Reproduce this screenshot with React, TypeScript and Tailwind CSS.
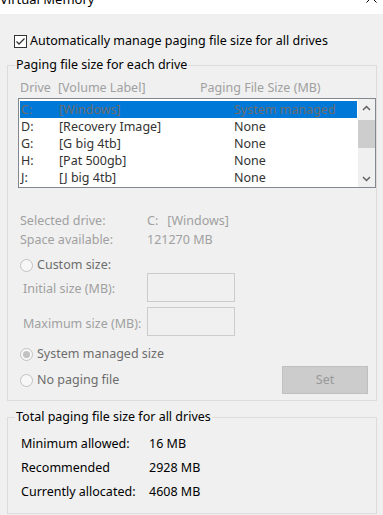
import type { ReactNode } from "react";

const drives = [
  { letter: "C:", label: "[Windows]", size: "System managed" },
  { letter: "D:", label: "[Recovery Image]", size: "None" },
  { letter: "G:", label: "[G big 4tb]", size: "None" },
  { letter: "H:", label: "[Pat 500gb]", size: "None" },
  { letter: "J:", label: "[J big 4tb]", size: "None" },
];

function Chevron({ up }: { up?: boolean }) {
  return (
    <svg width="9" height="6" viewBox="0 0 9 6" fill="none">
      <path
        d={up ? "M1 5 L4.5 1.5 L8 5" : "M1 1 L4.5 4.5 L8 1"}
        stroke="#606060"
        strokeWidth="1.5"
      />
    </svg>
  );
}

function Radio({ checked, children }: { checked?: boolean; children: ReactNode }) {
  return (
    <div className="flex items-center gap-[4px] h-[16px] pl-[12px] text-[#6d6d6d]">
      <span className="w-[13px] h-[13px] rounded-full border border-[#c2c2c2] bg-[#f7f7f7] flex items-center justify-center">
        {checked && <span className="w-[7px] h-[7px] rounded-full bg-[#c2c2c2]" />}
      </span>
      <span>{children}</span>
    </div>
  );
}

export default function App() {
  return (
    <div className="w-[383px] h-[515px] bg-[#f0f0f0] overflow-hidden text-[12.5px] leading-[16px] text-black font-['Noto_Sans',sans-serif]">
      {/* Title bar (cut off at top) */}
      <div className="h-[14px] bg-white flex justify-between overflow-hidden">
        <span className="-mt-[9px] text-[13px] leading-[16px]">Virtual Memory</span>
        <svg width="11" height="11" viewBox="0 0 11 11" className="-mt-[8px] mr-[6px]">
          <path d="M0.5 0.5 L10.5 10.5 M10.5 0.5 L0.5 10.5" stroke="#000" strokeWidth="1" />
        </svg>
      </div>

      {/* Auto manage checkbox */}
      <div className="flex items-center gap-[3px] mt-[19px] ml-[14px] h-[16px]">
        <span className="w-[13px] h-[13px] border border-[#333333] bg-white flex items-center justify-center">
          <svg width="11" height="11" viewBox="0 0 11 11" fill="none">
            <path d="M1.5 5.5 L4 8 L9.5 2.5" stroke="#333333" strokeWidth="1.3" />
          </svg>
        </span>
        <span>Automatically manage paging file size for all drives</span>
      </div>

      {/* Paging file size for each drive */}
      <fieldset className="mt-[8px] ml-[7px] w-[370px] border border-[#dcdcdc] pb-[6px]">
        <legend className="ml-[7px] px-[1px] leading-[16px]">Paging file size for each drive</legend>

        <div className="flex mt-[7px] pl-[12px] h-[16px] text-[#a0a0a0]">
          <span className="w-[38px]">Drive</span>
          <span className="w-[142px]">[Volume Label]</span>
          <span>Paging File Size (MB)</span>
        </div>

        <div className="mt-[2px] ml-[10px] w-[358px] h-[90px] border border-[#828790] bg-white flex">
          <div className="flex-1 pt-[2px] px-[1px]">
            {drives.map((d, i) => (
              <div
                key={d.letter}
                className={
                  i === 0
                    ? "flex items-center h-[17px] pl-[1px] bg-[#0078d7] text-[#6d6d6d]"
                    : "flex items-center h-[17px] pl-[1px] text-[#333333]"
                }
              >
                <span className="w-[38px]">{d.letter}</span>
                <span className="w-[175px]">{d.label}</span>
                <span>{d.size}</span>
              </div>
            ))}
          </div>
          <div className="w-[17px] bg-[#f0f0f0] flex flex-col">
            <div className="h-[17px] flex items-center justify-center">
              <Chevron up />
            </div>
            <div className="mt-[4px] h-[28px] bg-[#cdcdcd]" />
            <div className="flex-1" />
            <div className="h-[17px] flex items-center justify-center">
              <Chevron />
            </div>
          </div>
        </div>

        <div className="mt-[23px] pl-[12px] text-[#a0a0a0]">
          <div className="flex h-[19px] leading-[19px]">
            <span className="w-[127px]">Selected drive:</span>
            <span>C:</span>
            <span className="ml-[9px]">[Windows]</span>
          </div>
          <div className="flex h-[19px] leading-[19px]">
            <span className="w-[127px]">Space available:</span>
            <span>121270 MB</span>
          </div>
        </div>

        <div className="mt-[8px]">
          <Radio>Custom size:</Radio>
        </div>

        <div className="flex h-[29px] text-[#a0a0a0]">
          <span className="w-[139px] pl-[15px] pt-[8px]">Initial size (MB):</span>
          <span className="w-[88px] h-[29px] border border-[#cccccc]" />
        </div>
        <div className="flex h-[29px] mt-[5px] text-[#a0a0a0]">
          <span className="w-[139px] pl-[15px] pt-[9px]">Maximum size (MB):</span>
          <span className="w-[88px] h-[29px] border border-[#cccccc]" />
        </div>

        <div className="mt-[10px]">
          <Radio checked>System managed size</Radio>
        </div>

        <div className="flex items-center justify-between h-[28px] mt-[4px]">
          <Radio>No paging file</Radio>
          <button className="w-[86px] h-[28px] mr-[8px] bg-[#cccccc] border border-[#bfbfbf] text-[#999999] text-[12.5px]">
            Set
          </button>
        </div>
      </fieldset>

      {/* Totals */}
      <fieldset className="mt-[8px] ml-[7px] w-[370px] border border-[#dcdcdc] pb-[9px]">
        <legend className="ml-[7px] px-[1px] leading-[16px]">Total paging file size for all drives</legend>
        <div className="mt-[7px] pl-[13px]">
          <div className="flex h-[24px] leading-[24px]">
            <span className="w-[128px]">Minimum allowed:</span>
            <span>16 MB</span>
          </div>
          <div className="flex h-[24px] leading-[24px]">
            <span className="w-[128px]">Recommended</span>
            <span>2928 MB</span>
          </div>
          <div className="flex h-[24px] leading-[24px]">
            <span className="w-[128px]">Currently allocated:</span>
            <span>4608 MB</span>
          </div>
        </div>
      </fieldset>
    </div>
  );
}
